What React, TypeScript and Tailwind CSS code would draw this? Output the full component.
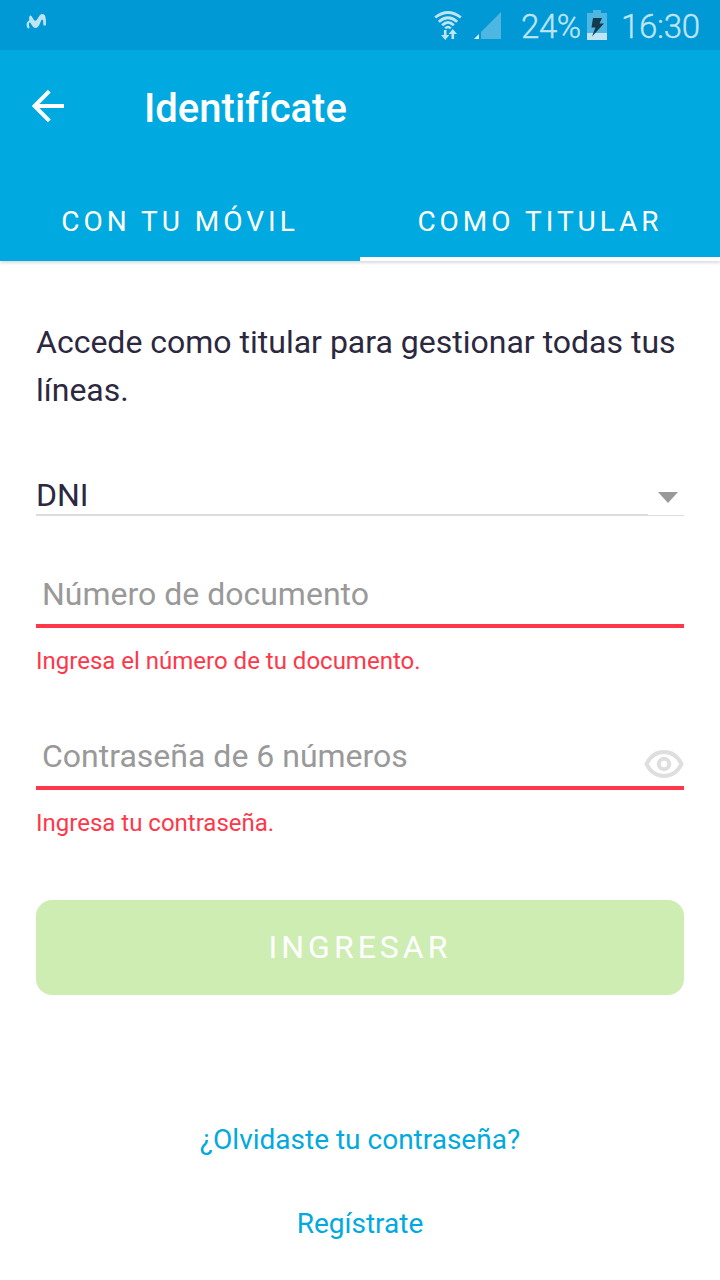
import type { ReactNode } from 'react';

function StatusBar() {
  return (
    <div className="flex h-[50px] items-start bg-[#0098d5] text-[#bfe5f4]">
      <svg className="ml-[26px] mt-[13px] h-[17px] w-[21px]" viewBox="0 0 21 17" fill="currentColor">
        <path d="M4.3 2.6C6.3 2.6 7.2 7.8 9.4 7.8C11.6 7.8 12.6 .9 16.4 .9C19.6 .9 20 4.5 20 11.6C20 13.2 17.6 13.2 17.4 11.6C17.2 9.6 17.4 6.6 16.2 6.6C14.4 6.6 13.9 15 9.8 15C6.2 15 5.2 10 3.8 9.3C2.5 9.8 2.9 12.6 3.4 14.3C3.7 15.7 2.2 16.1 1.4 14.8C.1 11.8 .3 8.5 3.3 7.5C3 5 3 3 4.3 2.6Z" />
      </svg>
      <svg className="ml-[387px] mt-[11px] h-[30px] w-[28px]" viewBox="0 0 28 30" fill="none" stroke="currentColor">
        <path d="M1.2 6.5Q14-3.5 26.8 6.5" strokeWidth="2.8" />
        <path d="M4.8 10.8Q14 2.8 23.2 10.8" strokeWidth="2.8" />
        <path d="M8.2 14.3Q14 8.5 19.8 14.3" strokeWidth="2.7" />
        <path d="M11.2 17.3Q14 14.7 16.8 17.3" strokeWidth="2.5" />
        <path d="M11.2 19V25M18.8 28V22" strokeWidth="2.6" />
        <path d="M7 24h8.4l-4.2 5ZM14.6 23h8.4l-4.2-5Z" fill="currentColor" stroke="none" />
      </svg>
      <svg className="ml-[12px] mt-[12px] h-[28px] w-[28px]" viewBox="0 0 28 28">
        <path d="M27 0V27H7V20Z" fill="#4db6e1" />
        <path d="M0 27 5 22V27Z" fill="#dff2f9" />
      </svg>
      <span className="ml-[19px] mt-[5px] w-[62px] whitespace-nowrap text-[33px] leading-[44px] font-light tracking-[-0.4px] [-webkit-text-stroke:0.4px_#bfe5f4]">24%</span>
      <svg className="ml-[4px] mt-[10px] h-[30px] w-[20px]" viewBox="0 0 20 30">
        <path d="M0 3H6V0H14V3H20V23H0Z" fill="#4db6e1" />
        <path d="M0 23H20V30H0Z" fill="#bfe5f4" />
        <path d="M6 8H15L12.5 13.5H17L5 26.5 8.5 17.5H4.5Z" fill="#123b4b" />
      </svg>
      <span className="ml-[14px] mt-[5px] whitespace-nowrap text-[33px] leading-[44px] font-light tracking-[-0.3px] [-webkit-text-stroke:0.4px_#bfe5f4]">16:30</span>
    </div>
  );
}

function Field({ label, error, icon }: { label: string; error: string; icon?: ReactNode }) {
  return (
    <div className="h-[162px]">
      <div className="flex h-[66px] items-start border-b-4 border-[#ff374a] pl-[6px]">
        <span className="flex-1 text-[32px] leading-[64px] text-[#999]">{label}</span>
        {icon}
      </div>
      <p className="mt-[17px] text-[24px] leading-[32px] text-[#ff374a]">{error}</p>
    </div>
  );
}

function EyeIcon() {
  return (
    <svg className="mt-[25px] h-[30px] w-[40px]" viewBox="0 0 40 30" fill="none" stroke="#dedede" strokeWidth="4">
      <path d="M2.5 15C6.2 7.3 12.3 3 20 3S33.8 7.3 37.5 15C33.8 22.7 27.7 27 20 27S6.2 22.7 2.5 15Z" />
      <circle cx="20" cy="15" r="5.2" />
    </svg>
  );
}

export default function App() {
  return (
    <div className="flex h-[1280px] w-[720px] flex-col overflow-hidden bg-white font-['Roboto',sans-serif] text-[#2b2840]">
      <StatusBar />
      <header className="h-[211px] bg-[#00a9e0] text-white shadow-[0_2px_3px_rgba(0,0,0,0.14)]">
        <div className="flex h-[112px] items-center pl-[32px]">
          <svg className="h-8 w-8" viewBox="0 0 32 32" fill="none" stroke="currentColor" strokeWidth="4">
            <path d="M32 16H3M17.3 1.2 2.5 16 17.3 30.8" />
          </svg>
          <h1 className="ml-[80px] mt-[6px] text-[40px] leading-[48px] font-medium">Identifícate</h1>
        </div>
        <nav className="grid h-[99px] grid-cols-2 text-[28px] tracking-[4px]">
          <div className="flex items-start justify-center pt-[40px] leading-[40px]">CON TU MÓVIL</div>
          <div className="flex items-start justify-center border-b-4 border-white pt-[40px] leading-[40px]">COMO TITULAR</div>
        </nav>
      </header>
      <main className="flex flex-col px-[36px] pt-[57px]">
        <p className="text-[32px] leading-[48px]">Accede como titular para gestionar todas tus líneas.</p>
        <div className="mt-[62px] flex h-[40px]">
          <div className="flex-1 border-b-2 border-[#dcdcdc] text-[32px] leading-[38px]">DNI</div>
          <div className="flex w-[36px] justify-center border-b border-[#dcdcdc] pt-[16px] pl-[4px]">
            <svg className="h-[11px] w-[20px]" viewBox="0 0 20 11"><path d="M0 0H20L10 11Z" fill="#999" /></svg>
          </div>
        </div>
        <div className="mt-[46px]">
          <Field label="Número de documento" error="Ingresa el número de tu documento." />
          <Field label="Contraseña de 6 números" error="Ingresa tu contraseña." icon={<EyeIcon />} />
        </div>
        <button className="mt-[14px] h-[95px] rounded-[16px] bg-[#ceedb3] pb-[2px] text-[32px] tracking-[4px] text-white">INGRESAR</button>
        <div className="mt-[125px] flex flex-col items-center gap-[44px] text-[28px] leading-[40px] text-[#00a9e0]">
          <a>¿Olvidaste tu contraseña?</a>
          <a>Regístrate</a>
        </div>
      </main>
    </div>
  );
}
